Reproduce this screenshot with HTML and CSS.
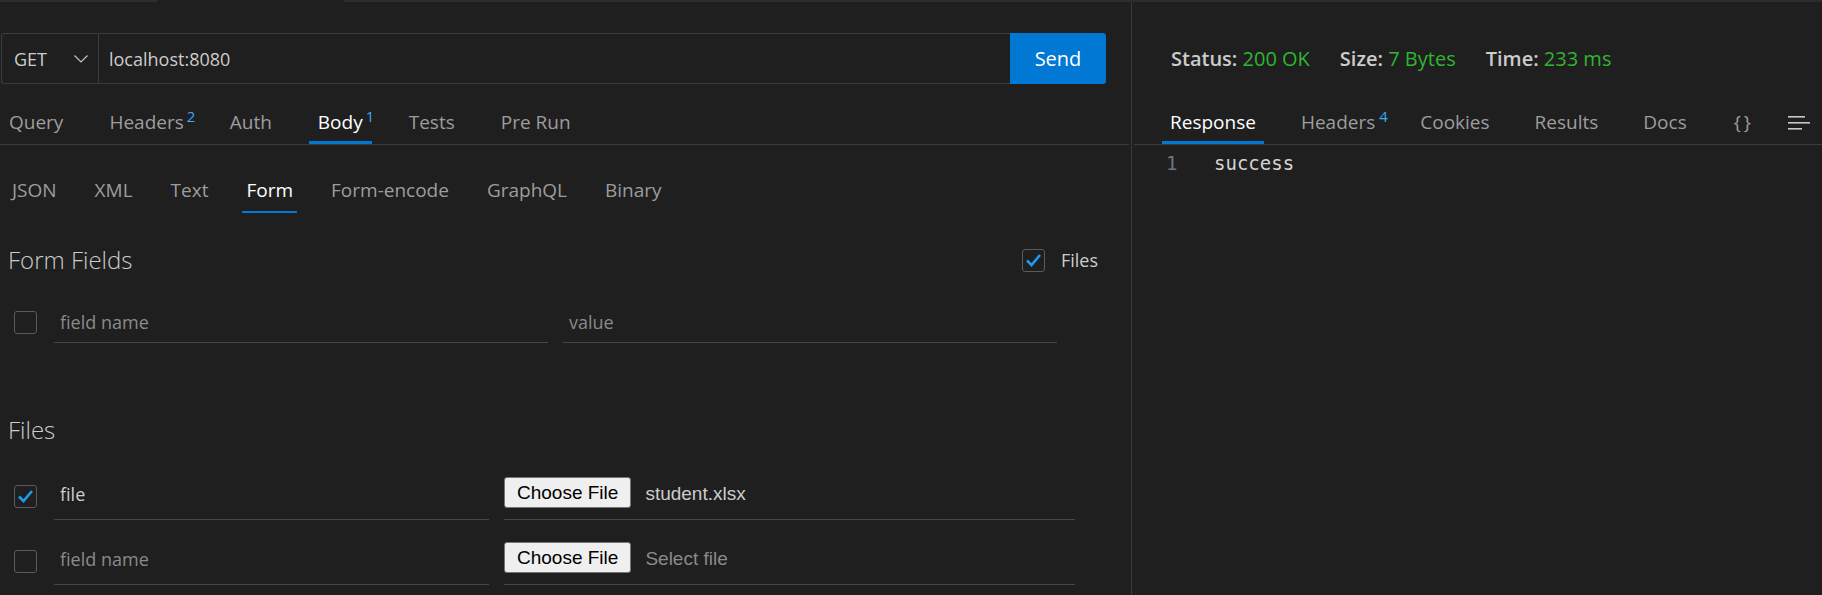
FILE: index.html
```html
<!DOCTYPE html>
<html lang="en">
<head>
<meta charset="utf-8">
<title>Thunder Client</title>
<link rel="stylesheet" href="styles.css">
</head>
<body>
<div class="topstrip">
  <div class="seg seg-a"></div>
  <div class="seg-gap"></div>
  <div class="seg seg-b"></div>
</div>
<div class="main">
  <section class="left">
    <div class="urlbar">
      <div class="field">
        <div class="method">
          <span>GET</span>
          <svg class="chev" width="14" height="8" viewBox="0 0 14 8"><polyline points="0.5,0.5 7,7 13.5,0.5" fill="none" stroke="#c5c5c5" stroke-width="1.2"/></svg>
        </div>
        <div class="url">localhost:8080</div>
      </div>
      <button class="send">Send</button>
    </div>

    <nav class="tabs">
      <div class="tab">Query</div>
      <div class="tab">Headers<span class="sup">2</span></div>
      <div class="tab">Auth</div>
      <div class="tab active">Body<span class="sup">1</span></div>
      <div class="tab">Tests</div>
      <div class="tab">Pre Run</div>
    </nav>

    <nav class="subtabs">
      <div class="subtab">JSON</div>
      <div class="subtab">XML</div>
      <div class="subtab">Text</div>
      <div class="subtab active">Form</div>
      <div class="subtab">Form-encode</div>
      <div class="subtab">GraphQL</div>
      <div class="subtab">Binary</div>
    </nav>

    <div class="section-head">
      <h2 class="heading">Form Fields</h2>
      <div class="toggle">
        <span class="cb checked"><svg width="21" height="21" viewBox="0 0 21 21"><polyline points="4,10.5 8.5,15 17,5" fill="none" stroke="#1a9cf0" stroke-width="2.6"/></svg></span>
        <span>Files</span>
      </div>
    </div>

    <div class="row form-row">
      <span class="cb"></span>
      <div class="inp name"><span class="ph">field name</span></div>
      <div class="inp value"><span class="ph">value</span></div>
    </div>

    <h2 class="heading files-title">Files</h2>

    <div class="row file-row">
      <span class="cb checked"><svg width="21" height="21" viewBox="0 0 21 21"><polyline points="4,10.5 8.5,15 17,5" fill="none" stroke="#1a9cf0" stroke-width="2.6"/></svg></span>
      <div class="inp fname"><span class="val">file</span></div>
      <div class="inp ffile"><button class="choose">Choose File</button><span class="fn">student.xlsx</span></div>
    </div>

    <div class="row file-row second">
      <span class="cb"></span>
      <div class="inp fname"><span class="ph">field name</span></div>
      <div class="inp ffile"><button class="choose">Choose File</button><span class="fn empty">Select file</span></div>
    </div>
  </section>

  <section class="right">
    <div class="status">
      <div class="stat"><b>Status:</b> <span class="ok">200 OK</span></div>
      <div class="stat"><b>Size:</b> <span class="ok">7 Bytes</span></div>
      <div class="stat"><b>Time:</b> <span class="ok">233 ms</span></div>
    </div>
    <nav class="tabs rtabs">
      <div class="tab active">Response</div>
      <div class="tab">Headers<span class="sup">4</span></div>
      <div class="tab">Cookies</div>
      <div class="tab">Results</div>
      <div class="tab">Docs</div>
      <div class="tab braces">{ }</div>
      <div class="tab menu">
        <svg width="23" height="14" viewBox="0 0 23 14"><rect x="0" y="0" width="17" height="1.6" fill="#c8c8c8"/><rect x="0" y="6" width="22" height="1.6" fill="#c8c8c8"/><rect x="0" y="12" width="14" height="1.6" fill="#c8c8c8"/></svg>
      </div>
    </nav>
    <div class="editor">
      <span class="ln">1</span><span class="code">success</span>
    </div>
  </section>
</div>
</body>
</html>
```

FILE: styles.css
```css
* { box-sizing: border-box; }
html, body { margin: 0; padding: 0; }
body {
  background: #1f1f1f;
  color: #cccccc;
  font-family: "Open Sans", "Noto Sans", sans-serif;
  font-size: 18px;
  width: 1822px;
  height: 595px;
  overflow: hidden;
}

/* top editor strip */
.topstrip { display: flex; height: 3px; }
.topstrip .seg { height: 2px; background: #2d2d2d; }
.seg-a { width: 157px; }
.seg-gap { width: 187px; }
.seg-b { flex: 1; }

.main { display: flex; height: 592px; }
.left { width: 1132px; border-right: 1px solid #3a3a3a; flex: none; }
.right { flex: 1; min-width: 0; }

/* url bar */
.urlbar { display: flex; height: 51px; width: 1105px; margin: 30px 0 0 1px; }
.field {
  flex: 1; display: flex;
  border: 1px solid #3c3c3c; border-right: none;
  border-radius: 3px 0 0 3px;
}
.method {
  width: 97px; flex: none;
  display: flex; align-items: center; justify-content: space-between;
  padding: 0 10px 0 12px;
  border-right: 1px solid #3c3c3c;
  color: #cccccc;
}
.chev { margin-top: 1px; }
.url { display: flex; align-items: center; padding-left: 10px; color: #cccccc; }
.send {
  width: 96px; flex: none;
  background: #0078d4; color: #ffffff; border: none;
  border-radius: 0 3px 3px 0;
  font: inherit; font-size: 20px;
}

/* tabs */
.tabs {
  display: flex; gap: 28px; height: 61px;
  border-bottom: 1px solid #3b3b3b;
  margin-right: 2px;
  font-size: 19px;
}
.tab {
  position: relative;
  display: flex; align-items: center;
  padding: 19px 9px 0;
  border-bottom: 3px solid transparent;
  color: #9d9d9d;
  white-space: nowrap;
}
.tab.active { color: #ffffff; border-bottom-color: #0078d4; }
.sup {
  position: absolute; left: calc(100% - 6px); top: 25px;
  font-size: 15px; line-height: 1; color: #3aa8f5;
}

.subtabs { display: flex; gap: 30px; height: 68px; padding-left: 8px; font-size: 19px; }
.subtab {
  display: flex; align-items: center;
  padding: 24px 4px 0;
  border-bottom: 2px solid transparent;
  color: #9d9d9d;
}
.subtab.active { color: #ffffff; border-bottom-color: #0078d4; }

/* form */
.section-head {
  display: flex; align-items: center; justify-content: space-between;
  width: 1105px; height: 34px;
  margin-top: 30px; padding: 0 7px 0 8px;
}
.heading {
  margin: 0; font-size: 24px; font-weight: 300; line-height: 34px;
  color: #cccccc;
}
.toggle { display: flex; align-items: center; gap: 16px; color: #cccccc; }

.cb {
  width: 23px; height: 23px; flex: none;
  border: 1px solid #5a5a5a; border-radius: 3px;
  display: flex; align-items: center; justify-content: center;
}

.row { display: flex; align-items: center; padding-left: 14px; }
.form-row { margin-top: 29px; gap: 15px; }
.form-row .cb { margin-right: 2px; margin-bottom: 5px; }
.inp {
  height: 37px;
  border-bottom: 1px solid #474747;
  display: flex; align-items: center;
  padding-left: 6px;
}
.form-row .inp { width: 494px; padding-bottom: 4px; }
.ph { color: #8a8a8a; }
.val { color: #cccccc; }

.files-title { padding-left: 8px; margin-top: 70px; }

.file-row { margin-top: 28px; gap: 15px; }
.file-row.second { margin-top: 20px; }
.file-row .cb { margin-right: 2px; margin-top: -2px; }
.file-row .inp { height: 45px; padding-bottom: 7px; }
.fname { width: 435px; }
.ffile { width: 571px; padding-left: 0 !important; gap: 14px; }
.choose {
  height: 31px; margin-bottom: 2px;
  padding: 0 12px;
  background: #efefef; color: #000000;
  border: 1px solid #767676; border-radius: 3px;
  font-family: "Liberation Sans", Arial, sans-serif; font-size: 19px;
}
.fn { font-family: "Liberation Sans", Arial, sans-serif; font-size: 19px; color: #cccccc; margin-top: 1px; }
.fn.empty { color: #8a8a8a; }

/* right pane */
.status {
  height: 81px; padding: 30px 0 0 39px;
  display: flex; align-items: center; gap: 30px;
  font-size: 20px;
}
.stat b { font-weight: 600; color: #cccccc; }
.ok { color: #2fb52f; }

.rtabs { margin: 0 0 0 2px; padding-left: 28px; gap: 29px; }
.rtabs .tab { padding-left: 8px; padding-right: 8px; }
.rtabs .sup { left: calc(100% - 4px); }
.rtabs .braces { margin-left: 2px; word-spacing: -2px; }
.rtabs .menu { margin-left: -8px; padding-top: 21px; }

.editor {
  display: flex; align-items: center;
  margin-top: 5px; padding-left: 34px; height: 26px;
  font-family: "DejaVu Sans Mono", monospace; font-size: 19px;
}
.ln { width: 48px; color: #6e7681; }
.code { color: #d4d4d4; }
```
